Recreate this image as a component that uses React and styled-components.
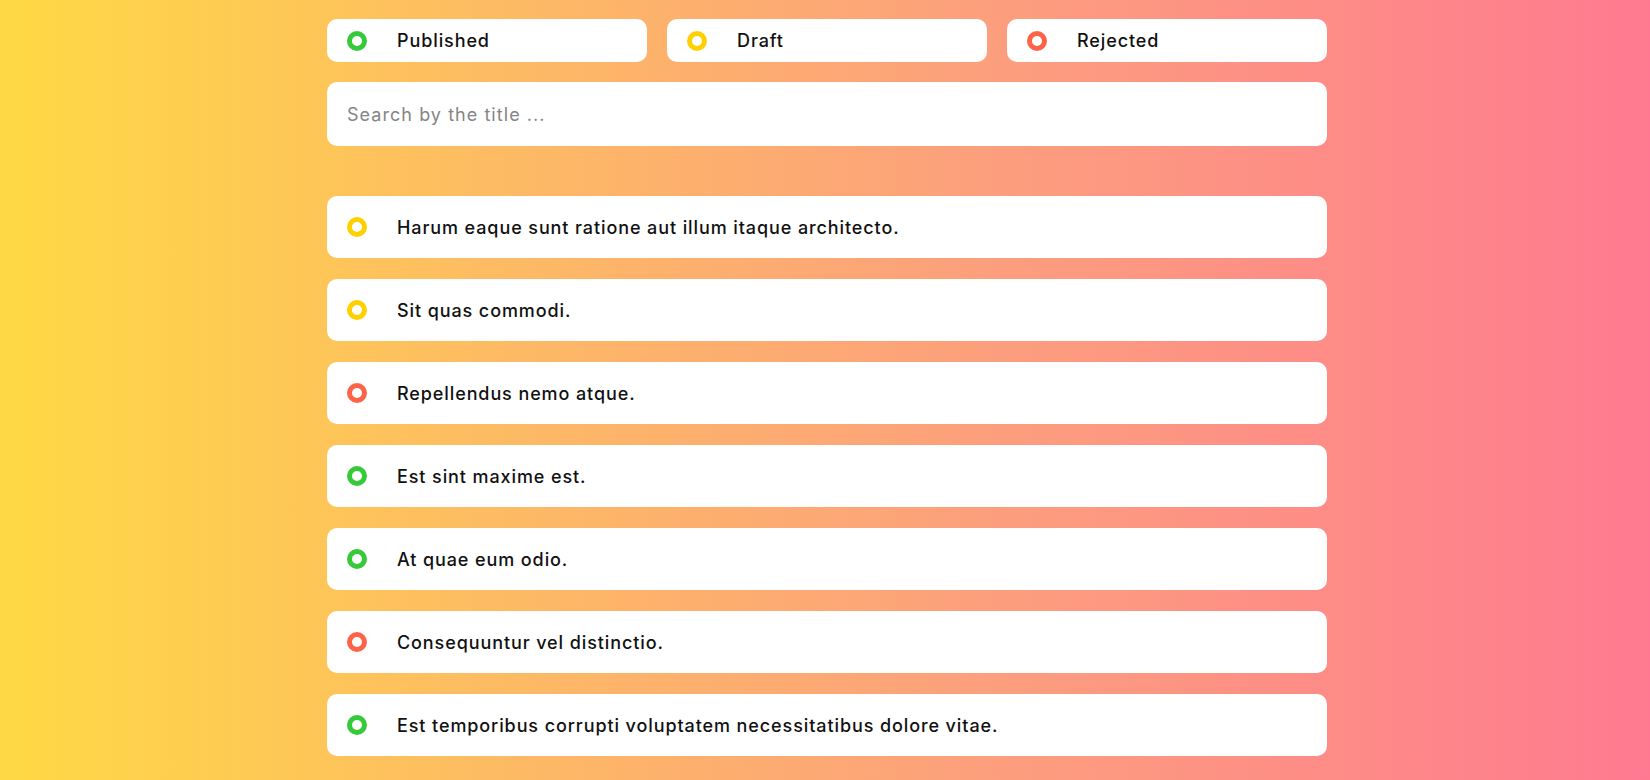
import React, { useState } from "react";
import styled, { createGlobalStyle } from "styled-components";

const GlobalStyle = createGlobalStyle`
	html, body {
		margin: 0;
		padding: 0;
	}
	body {
		font-family: "Inter", "Noto Sans", sans-serif;
		color: #111;
	}
	* {
		box-sizing: border-box;
	}
`;

const STATUS_COLORS = {
	published: "#36c93a",
	draft: "#ffd000",
	rejected: "#ff6347",
};

const posts = [
	{ id: 1, title: "Harum eaque sunt ratione aut illum itaque architecto.", status: "draft" },
	{ id: 2, title: "Sit quas commodi.", status: "draft" },
	{ id: 3, title: "Repellendus nemo atque.", status: "rejected" },
	{ id: 4, title: "Est sint maxime est.", status: "published" },
	{ id: 5, title: "At quae eum odio.", status: "published" },
	{ id: 6, title: "Consequuntur vel distinctio.", status: "rejected" },
	{ id: 7, title: "Est temporibus corrupti voluptatem necessitatibus dolore vitae.", status: "published" },
];

const PageElm = styled.div`
	min-height: 100vh;
	background: linear-gradient(to right, #ffd944 0%, #fdbb63 30%, #fc9f7d 60%, #ff7a90 100%);
	padding: 19px 0 24px 4px;
`;

const ContainerElm = styled.div`
	width: 1000px;
	margin: 0 auto;
`;

const FilterBarElm = styled.div`
	display: grid;
	grid-template-columns: repeat(3, 1fr);
	gap: 20px;
	margin-bottom: 20px;
`;

const FilterButtonElm = styled.button`
	display: flex;
	align-items: center;
	height: 43px;
	padding: 0 0 0 20px;
	border: 0;
	border-radius: 10px;
	background-color: #fff;
	font-family: inherit;
	font-size: 18px;
	font-weight: 500;
	letter-spacing: 0.9px;
	color: #111;
	cursor: pointer;
	text-align: left;
`;

const RingElm = styled.span`
	display: block;
	flex-shrink: 0;
	width: 20px;
	height: 20px;
	border-radius: 50%;
	border: 5.5px solid ${(p) => p.$color};
	margin-right: 30px;
`;

const SearchElm = styled.input`
	display: block;
	width: 100%;
	height: 64px;
	padding: 0 20px;
	border: 0;
	border-radius: 10px;
	background-color: #fff;
	font-family: inherit;
	font-size: 18px;
	letter-spacing: 1.05px;
	color: #111;
	margin-bottom: 50px;

	&::placeholder {
		color: #858585;
	}

	&:focus {
		outline: none;
	}
`;

const ListElm = styled.ul`
	list-style: none;
	margin: 0;
	padding: 0;
	display: flex;
	flex-direction: column;
	gap: 21px;
`;

const PostElm = styled.li`
	display: flex;
	align-items: center;
	height: 62px;
	padding-left: 20px;
	border-radius: 10px;
	background-color: #fff;
	font-size: 18px;
	font-weight: 500;
	letter-spacing: 0.9px;
	cursor: pointer;
`;

export default function App() {
	const [query, setQuery] = useState("");
	const shown = posts.filter((p) => p.title.toLowerCase().includes(query.toLowerCase()));

	return (
		<>
			<GlobalStyle />
			<PageElm>
				<ContainerElm>
					<FilterBarElm>
						<FilterButtonElm>
							<RingElm $color={STATUS_COLORS.published} />
							Published
						</FilterButtonElm>
						<FilterButtonElm>
							<RingElm $color={STATUS_COLORS.draft} />
							Draft
						</FilterButtonElm>
						<FilterButtonElm>
							<RingElm $color={STATUS_COLORS.rejected} />
							Rejected
						</FilterButtonElm>
					</FilterBarElm>
					<SearchElm
						type="text"
						placeholder="Search by the title ..."
						value={query}
						onChange={(e) => setQuery(e.target.value)}
					/>
					<ListElm>
						{shown.map((post) => (
							<PostElm key={post.id}>
								<RingElm $color={STATUS_COLORS[post.status]} />
								{post.title}
							</PostElm>
						))}
					</ListElm>
				</ContainerElm>
			</PageElm>
		</>
	);
}
